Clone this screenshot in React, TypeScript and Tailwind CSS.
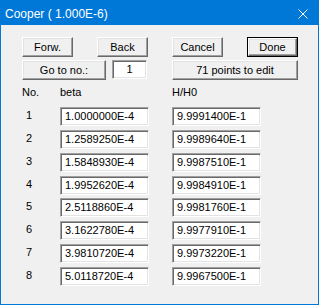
import React from "react";

const rows = [
  ["1", "1.0000000E-4", "9.9991400E-1"],
  ["2", "1.2589250E-4", "9.9989640E-1"],
  ["3", "1.5848930E-4", "9.9987510E-1"],
  ["4", "1.9952620E-4", "9.9984910E-1"],
  ["5", "2.5118860E-4", "9.9981760E-1"],
  ["6", "3.1622780E-4", "9.9977910E-1"],
  ["7", "3.9810720E-4", "9.9973220E-1"],
  ["8", "5.0118720E-4", "9.9967500E-1"],
];

function Btn({ label, width, primary }: { label: string; width: string; primary?: boolean }) {
  return (
    <div className={`${width} h-[20px] ${primary ? "border border-black" : ""}`}>
      <div className="h-full w-full flex items-center justify-center bg-[#f0f0f0] border border-t-white border-l-white border-b-[#696969] border-r-[#696969] shadow-[inset_-1px_-1px_0_#a0a0a0,inset_1px_1px_0_#e3e3e3] leading-[13px]">
        {label}
      </div>
    </div>
  );
}

function Field({ value, width, center }: { value: string; width: string; center?: boolean }) {
  return (
    <div
      className={`${width} h-[19px] bg-white border border-t-[#a0a0a0] border-l-[#a0a0a0] border-b-white border-r-white shadow-[inset_1px_1px_0_#696969,inset_-1px_-1px_0_#e3e3e3] leading-[15px] py-[1px] ${center ? "text-center" : "pl-[4px]"}`}
    >
      {value}
    </div>
  );
}

export default function App() {
  return (
    <div
      className="w-[319px] h-[305px] border border-[#0078d7] bg-[#f0f0f0] flex flex-col text-black text-[11px]"
      style={{ fontFamily: '"Liberation Sans", Arial, sans-serif' }}
    >
      {/* Title bar */}
      <div className="h-[24px] bg-[#0078d7] flex justify-between items-start shrink-0">
        <span className="pl-[4px] pt-[6px] text-[12px] leading-[14px] text-white">Cooper ( 1.000E-6)</span>
        <svg width="10" height="10" viewBox="0 0 10 10" className="mt-[8px] mr-[10px]">
          <path d="M0.5 0.5 L9.5 9.5 M9.5 0.5 L0.5 9.5" stroke="white" strokeWidth="1" />
        </svg>
      </div>

      {/* Body */}
      <div className="pl-[21px] pt-[12px] flex flex-col">
        <div className="flex gap-[24px]">
          <Btn label="Forw." width="w-[51px]" />
          <Btn label="Back" width="w-[51px]" />
          <Btn label="Cancel" width="w-[51px]" />
          <Btn label="Done" width="w-[51px]" primary />
        </div>
        <div className="flex mt-[3px] items-start">
          <Btn label="Go to no.:" width="w-[84px]" />
          <div className="ml-[6px]">
            <Field value="1" width="w-[35px]" center />
          </div>
          <div className="ml-[25px]">
            <Btn label="71 points to edit" width="w-[126px]" />
          </div>
        </div>

        <div className="grid grid-cols-[38px_112px_89px] mt-[6px] leading-[13px]">
          <span>No.</span>
          <span>beta</span>
          <span>H/H0</span>
        </div>

        <div className="grid grid-cols-[38px_112px_89px] gap-y-[3.86px] mt-[8px]">
          {rows.map(([n, b, h]) => (
            <React.Fragment key={n}>
              <span className="pl-[4px] mt-[2px] leading-[13px]">{n}</span>
              <Field value={b} width="w-[89px]" />
              <Field value={h} width="w-[89px]" />
            </React.Fragment>
          ))}
        </div>
      </div>
    </div>
  );
}
